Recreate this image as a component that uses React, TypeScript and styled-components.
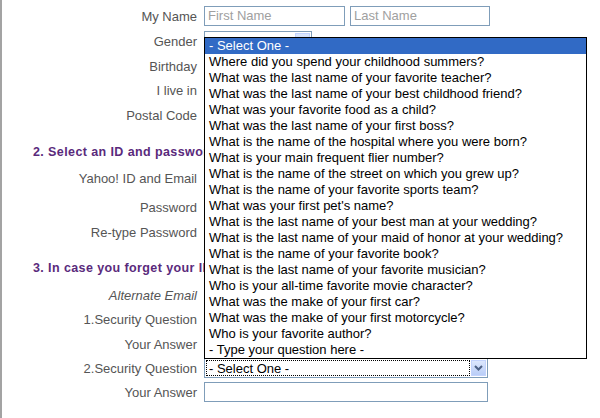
import React from "react";
import styled, { createGlobalStyle } from "styled-components";

const GlobalStyle = createGlobalStyle`
  html, body {
    margin: 0;
    padding: 0;
    background: #ffffff;
  }
  body {
    font-family: "Liberation Sans", Arial, sans-serif;
  }
`;

const Page = styled.div`
  position: relative;
  width: 598px;
  height: 418px;
  border-left: 2px solid #a3a3a3;
  background: #ffffff;
  overflow: hidden;
`;

const Form = styled.div`
  display: flex;
  flex-direction: column;
  padding-top: 4px;
`;

const Row = styled.div<{ $top?: number }>`
  display: grid;
  grid-template-columns: 195px 1fr;
  column-gap: 7px;
  align-items: center;
  height: 24px;
  margin-top: ${(p) => p.$top ?? 0}px;
`;

const Label = styled.div<{ $italic?: boolean }>`
  text-align: right;
  font-size: 13px;
  color: #555555;
  font-style: ${(p) => (p.$italic ? "italic" : "normal")};
  white-space: nowrap;
`;

const Heading = styled.div<{ $top?: number }>`
  height: 24px;
  line-height: 24px;
  padding-left: 31px;
  margin-top: ${(p) => p.$top ?? 0}px;
  font-family: "Liberation Sans", Arial, sans-serif;
  font-weight: bold;
  font-size: 12.5px;
  letter-spacing: 0.4px;
  color: #5a2a7c;
  white-space: nowrap;
`;

const Fields = styled.div`
  display: flex;
  gap: 5px;
  align-items: center;
`;

const TextBox = styled.div<{ $w: number }>`
  box-sizing: border-box;
  width: ${(p) => p.$w}px;
  height: 20px;
  border: 1px solid #7f9db9;
  padding: 0 3px;
  font-size: 13px;
  line-height: 18px;
  color: #a0a0a0;
  white-space: nowrap;
`;

const SelectBox = styled.div<{ $w: number }>`
  box-sizing: border-box;
  width: ${(p) => p.$w}px;
  height: 20px;
  border: 1px solid #7f9db9;
  display: flex;
  align-items: stretch;
  padding: 1px;
  font-size: 13px;
  color: #000;
`;

const SelectValue = styled.div<{ $focus?: boolean }>`
  flex: 1;
  padding: 0 2px;
  line-height: 15px;
  border: 1px dotted ${(p) => (p.$focus ? "#000" : "transparent")};
  white-space: nowrap;
`;

const SelectButton = styled.div`
  width: 15px;
  margin-left: 1px;
  background: linear-gradient(#dce7fd, #b9cdf7);
  border: 1px solid #c3d3fd;
  box-sizing: border-box;
  display: flex;
  align-items: center;
  justify-content: center;
`;

const DropList = styled.div`
  position: absolute;
  left: 202px;
  top: 37px;
  width: 383px;
  box-sizing: border-box;
  border: 1px solid #000;
  background: #fff;
`;

const Option = styled.div<{ $active?: boolean }>`
  height: 16px;
  line-height: 16px;
  padding: 0 3px 0 4px;
  font-size: 13px;
  white-space: nowrap;
  color: ${(p) => (p.$active ? "#fff" : "#000")};
  background: ${(p) => (p.$active ? "#316ac5" : "transparent")};
`;

const questions = [
  "- Select One -",
  "Where did you spend your childhood summers?",
  "What was the last name of your favorite teacher?",
  "What was the last name of your best childhood friend?",
  "What was your favorite food as a child?",
  "What was the last name of your first boss?",
  "What is the name of the hospital where you were born?",
  "What is your main frequent flier number?",
  "What is the name of the street on which you grew up?",
  "What is the name of your favorite sports team?",
  "What was your first pet's name?",
  "What is the last name of your best man at your wedding?",
  "What is the last name of your maid of honor at your wedding?",
  "What is the name of your favorite book?",
  "What is the last name of your favorite musician?",
  "Who is your all-time favorite movie character?",
  "What was the make of your first car?",
  "What was the make of your first motorcycle?",
  "Who is your favorite author?",
  "- Type your question here -",
];

const Chevron = () => (
  <svg width="9" height="6" viewBox="0 0 9 6">
    <path d="M1 1 L4.5 4.5 L8 1" fill="none" stroke="#4d6185" strokeWidth="2" />
  </svg>
);

export default function App() {
  return (
    <>
      <GlobalStyle />
      <Page>
        <Form>
          <Row>
            <Label>My Name</Label>
            <Fields>
              <TextBox $w={141}>First Name</TextBox>
              <TextBox $w={140}>Last Name</TextBox>
            </Fields>
          </Row>
          <Row $top={1}>
            <Label>Gender</Label>
            <SelectBox $w={108}>
              <SelectValue />
              <SelectButton />
            </SelectBox>
          </Row>
          <Row $top={1}>
            <Label>Birthday</Label>
          </Row>
          <Row>
            <Label>I live in</Label>
          </Row>
          <Row $top={1}>
            <Label>Postal Code</Label>
          </Row>
          <Heading $top={13}>2. Select an ID and password</Heading>
          <Row $top={2}>
            <Label>Yahoo! ID and Email</Label>
          </Row>
          <Row $top={5}>
            <Label>Password</Label>
          </Row>
          <Row $top={1}>
            <Label>Re-type Password</Label>
          </Row>
          <Heading $top={12}>3. In case you forget your ID or password...</Heading>
          <Row $top={3}>
            <Label $italic>Alternate Email</Label>
          </Row>
          <Row>
            <Label>1.Security Question</Label>
          </Row>
          <Row $top={1}>
            <Label>Your Answer</Label>
          </Row>
          <Row>
            <Label>2.Security Question</Label>
            <SelectBox $w={284}>
              <SelectValue $focus>- Select One -</SelectValue>
              <SelectButton>
                <Chevron />
              </SelectButton>
            </SelectBox>
          </Row>
          <Row>
            <Label>Your Answer</Label>
            <TextBox $w={284} />
          </Row>
        </Form>
        <DropList>
          {questions.map((q, i) => (
            <Option key={q} $active={i === 0}>
              {q}
            </Option>
          ))}
        </DropList>
      </Page>
    </>
  );
}
